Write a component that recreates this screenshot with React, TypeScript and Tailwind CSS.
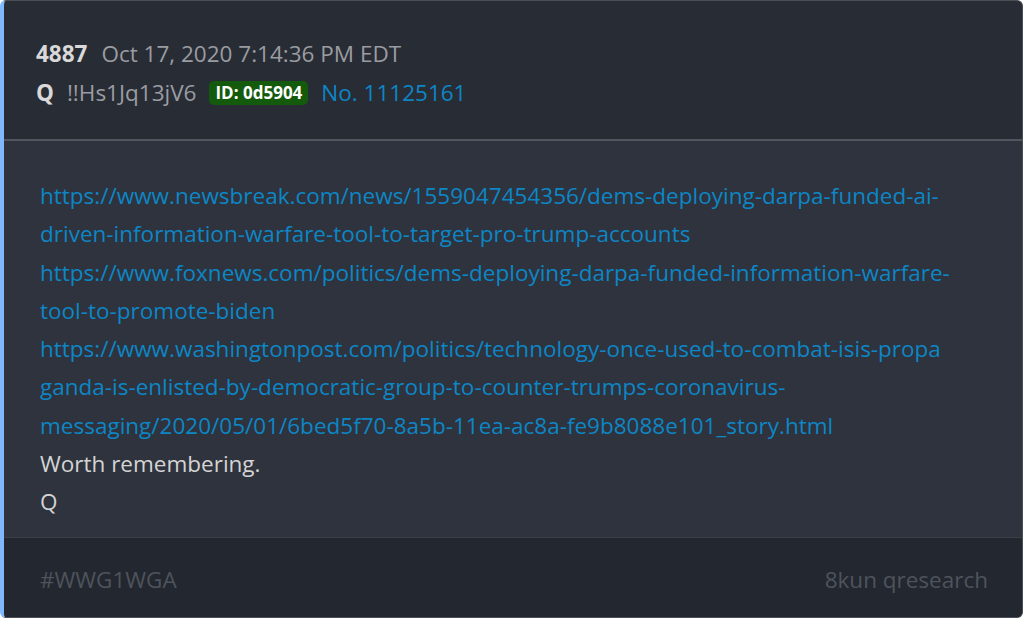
const lines = [
  'https://www.newsbreak.com/news/1559047454356/dems-deploying-darpa-funded-ai-',
  'driven-information-warfare-tool-to-target-pro-trump-accounts',
];
const lines2 = [
  'https://www.foxnews.com/politics/dems-deploying-darpa-funded-information-warfare-',
  'tool-to-promote-biden',
];
const lines3 = [
  'https://www.washingtonpost.com/politics/technology-once-used-to-combat-isis-propa',
  'ganda-is-enlisted-by-democratic-group-to-counter-trumps-coronavirus-',
  'messaging/2020/05/01/6bed5f70-8a5b-11ea-ac8a-fe9b8088e101_story.html',
];

const Link = ({ parts }: { parts: string[] }) => (
  <a className="block text-[#0d86c6]" href="#">
    {parts.map((p) => (
      <span key={p} className="block">
        {p}
      </span>
    ))}
  </a>
);

export default function App() {
  return (
    <div
      className="w-[1024px] h-[620px] bg-white"
      style={{ fontFamily: '"Open Sans", "Noto Sans", sans-serif' }}
    >
      <div className="w-[1023px] h-[618px] flex flex-col overflow-hidden rounded-md border border-[#4a4e56] border-l-4 border-l-[#80b9fb] bg-[#282c35] text-[22.5px]">
        <div className="h-[140px] shrink-0 px-8 pt-[34px] border-b-2 border-[#50555e]">
          <div className="flex items-center h-[38px] gap-[14px]">
            <span className="font-bold text-[#d9d9d9]">4887</span>
            <span className="text-[#9a9ca1]">Oct 17, 2020 7:14:36 PM EDT</span>
          </div>
          <div className="flex items-center h-[39px] gap-[13px]">
            <span className="font-bold text-[#d9d9d9]">Q</span>
            <span className="text-[#9a9ca1]">!!Hs1Jq13jV6</span>
            <span className="h-6 px-[6px] flex items-center rounded-[5px] bg-[#135a0c] text-white text-[17px] font-bold">
              ID: 0d5904
            </span>
            <span className="text-[#0d86c6]">No. 11125161</span>
          </div>
        </div>
        <div className="flex-1 bg-[#2e333d] pl-9 pt-[36px] leading-[38.25px] text-[#d4d4d4]">
          <Link parts={lines} />
          <Link parts={lines2} />
          <Link parts={lines3} />
          <div>Worth remembering.</div>
          <div>Q</div>
        </div>
        <div className="h-[80px] shrink-0 bg-[#23272f] border-t border-[#3b3f48] flex items-center justify-between pl-9 pr-[34px] pt-1 text-[#4e535c]">
          <span>#WWG1WGA</span>
          <span>8kun qresearch</span>
        </div>
      </div>
    </div>
  );
}
